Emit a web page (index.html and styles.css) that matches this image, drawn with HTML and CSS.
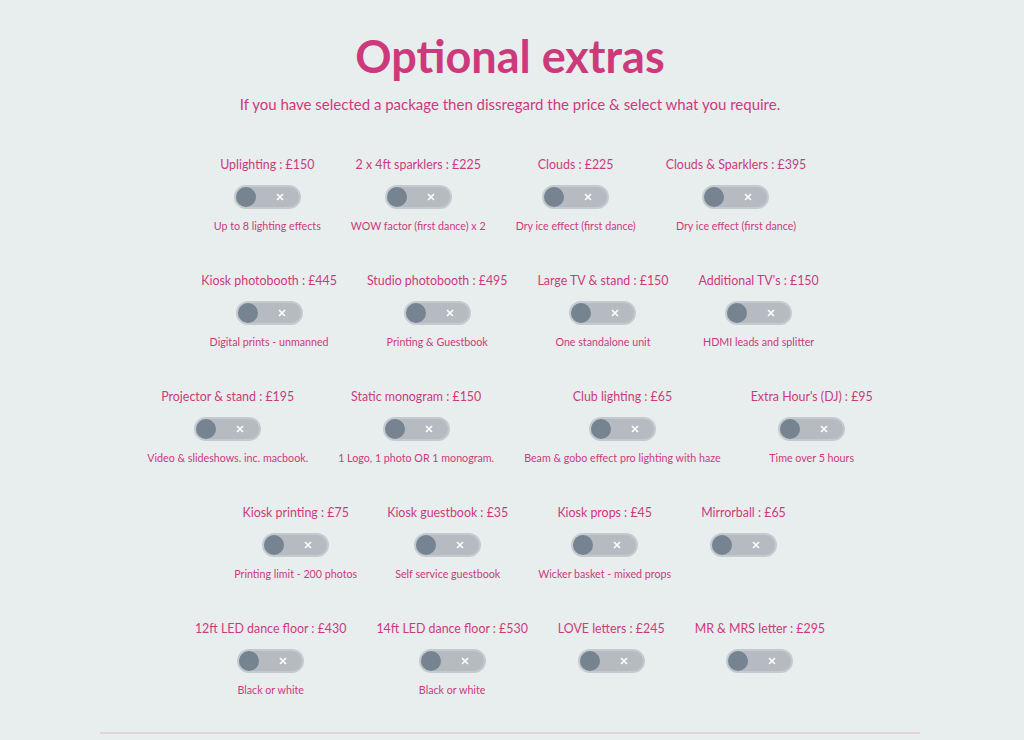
FILE: index.html
```html
<!DOCTYPE html>
<html lang="en">
  <head>
    <meta charset="UTF-8" />
    <meta name="viewport" content="width=device-width, initial-scale=1.0" />
    <title>Optional extras</title>
    <link rel="stylesheet" href="styles.css">
  </head>
  <body>
    <section id="extras">
      <h1 class="title">Optional extras</h1>
      <p class="intro">If you have selected a package then dissregard the price &amp; select what you require.</p>

      <div class="row">
        <div class="extra">
          <span class="name">Uplighting : £150</span>
          <label class="switch"><input type="checkbox" /><span class="track"><span class="knob"></span><svg class="cross" viewBox="0 0 8 8"><path d="M1 1L7 7M7 1L1 7" /></svg></span></label>
          <span class="note">Up to 8 lighting effects</span>
        </div>
        <div class="extra">
          <span class="name">2 x 4ft sparklers : £225</span>
          <label class="switch"><input type="checkbox" /><span class="track"><span class="knob"></span><svg class="cross" viewBox="0 0 8 8"><path d="M1 1L7 7M7 1L1 7" /></svg></span></label>
          <span class="note">WOW factor (first dance) x 2</span>
        </div>
        <div class="extra">
          <span class="name">Clouds : £225</span>
          <label class="switch"><input type="checkbox" /><span class="track"><span class="knob"></span><svg class="cross" viewBox="0 0 8 8"><path d="M1 1L7 7M7 1L1 7" /></svg></span></label>
          <span class="note">Dry ice effect (first dance)</span>
        </div>
        <div class="extra">
          <span class="name">Clouds &amp; Sparklers : £395</span>
          <label class="switch"><input type="checkbox" /><span class="track"><span class="knob"></span><svg class="cross" viewBox="0 0 8 8"><path d="M1 1L7 7M7 1L1 7" /></svg></span></label>
          <span class="note">Dry ice effect (first dance)</span>
        </div>
      </div>

      <div class="row">
        <div class="extra">
          <span class="name">Kiosk photobooth : £445</span>
          <label class="switch"><input type="checkbox" /><span class="track"><span class="knob"></span><svg class="cross" viewBox="0 0 8 8"><path d="M1 1L7 7M7 1L1 7" /></svg></span></label>
          <span class="note">Digital prints - unmanned</span>
        </div>
        <div class="extra">
          <span class="name">Studio photobooth : £495</span>
          <label class="switch"><input type="checkbox" /><span class="track"><span class="knob"></span><svg class="cross" viewBox="0 0 8 8"><path d="M1 1L7 7M7 1L1 7" /></svg></span></label>
          <span class="note">Printing &amp; Guestbook</span>
        </div>
        <div class="extra">
          <span class="name">Large TV &amp; stand : £150</span>
          <label class="switch"><input type="checkbox" /><span class="track"><span class="knob"></span><svg class="cross" viewBox="0 0 8 8"><path d="M1 1L7 7M7 1L1 7" /></svg></span></label>
          <span class="note">One standalone unit</span>
        </div>
        <div class="extra">
          <span class="name">Additional TV's : £150</span>
          <label class="switch"><input type="checkbox" /><span class="track"><span class="knob"></span><svg class="cross" viewBox="0 0 8 8"><path d="M1 1L7 7M7 1L1 7" /></svg></span></label>
          <span class="note">HDMI leads and splitter</span>
        </div>
      </div>

      <div class="row">
        <div class="extra">
          <span class="name">Projector &amp; stand : £195</span>
          <label class="switch"><input type="checkbox" /><span class="track"><span class="knob"></span><svg class="cross" viewBox="0 0 8 8"><path d="M1 1L7 7M7 1L1 7" /></svg></span></label>
          <span class="note">Video &amp; slideshows. inc. macbook.</span>
        </div>
        <div class="extra">
          <span class="name">Static monogram : £150</span>
          <label class="switch"><input type="checkbox" /><span class="track"><span class="knob"></span><svg class="cross" viewBox="0 0 8 8"><path d="M1 1L7 7M7 1L1 7" /></svg></span></label>
          <span class="note">1 Logo, 1 photo OR 1 monogram.</span>
        </div>
        <div class="extra">
          <span class="name">Club lighting : £65</span>
          <label class="switch"><input type="checkbox" /><span class="track"><span class="knob"></span><svg class="cross" viewBox="0 0 8 8"><path d="M1 1L7 7M7 1L1 7" /></svg></span></label>
          <span class="note">Beam &amp; gobo effect pro lighting with haze</span>
        </div>
        <div class="extra">
          <span class="name">Extra Hour's (DJ) : £95</span>
          <label class="switch"><input type="checkbox" /><span class="track"><span class="knob"></span><svg class="cross" viewBox="0 0 8 8"><path d="M1 1L7 7M7 1L1 7" /></svg></span></label>
          <span class="note">Time over 5 hours</span>
        </div>
      </div>

      <div class="row">
        <div class="extra">
          <span class="name">Kiosk printing : £75</span>
          <label class="switch"><input type="checkbox" /><span class="track"><span class="knob"></span><svg class="cross" viewBox="0 0 8 8"><path d="M1 1L7 7M7 1L1 7" /></svg></span></label>
          <span class="note">Printing limit - 200 photos</span>
        </div>
        <div class="extra">
          <span class="name">Kiosk guestbook : £35</span>
          <label class="switch"><input type="checkbox" /><span class="track"><span class="knob"></span><svg class="cross" viewBox="0 0 8 8"><path d="M1 1L7 7M7 1L1 7" /></svg></span></label>
          <span class="note">Self service guestbook</span>
        </div>
        <div class="extra">
          <span class="name">Kiosk props : £45</span>
          <label class="switch"><input type="checkbox" /><span class="track"><span class="knob"></span><svg class="cross" viewBox="0 0 8 8"><path d="M1 1L7 7M7 1L1 7" /></svg></span></label>
          <span class="note">Wicker basket - mixed props</span>
        </div>
        <div class="extra">
          <span class="name">Mirrorball : £65</span>
          <label class="switch"><input type="checkbox" /><span class="track"><span class="knob"></span><svg class="cross" viewBox="0 0 8 8"><path d="M1 1L7 7M7 1L1 7" /></svg></span></label>
          <span class="note"></span>
        </div>
      </div>

      <div class="row">
        <div class="extra">
          <span class="name">12ft LED dance floor : £430</span>
          <label class="switch"><input type="checkbox" /><span class="track"><span class="knob"></span><svg class="cross" viewBox="0 0 8 8"><path d="M1 1L7 7M7 1L1 7" /></svg></span></label>
          <span class="note">Black or white</span>
        </div>
        <div class="extra">
          <span class="name">14ft LED dance floor : £530</span>
          <label class="switch"><input type="checkbox" /><span class="track"><span class="knob"></span><svg class="cross" viewBox="0 0 8 8"><path d="M1 1L7 7M7 1L1 7" /></svg></span></label>
          <span class="note">Black or white</span>
        </div>
        <div class="extra">
          <span class="name">LOVE letters : £245</span>
          <label class="switch"><input type="checkbox" /><span class="track"><span class="knob"></span><svg class="cross" viewBox="0 0 8 8"><path d="M1 1L7 7M7 1L1 7" /></svg></span></label>
          <span class="note"></span>
        </div>
        <div class="extra">
          <span class="name">MR &amp; MRS letter : £295</span>
          <label class="switch"><input type="checkbox" /><span class="track"><span class="knob"></span><svg class="cross" viewBox="0 0 8 8"><path d="M1 1L7 7M7 1L1 7" /></svg></span></label>
          <span class="note"></span>
        </div>
      </div>

      <hr class="divider" />
    </section>
  </body>
</html>
```

FILE: styles.css
```css
body {
  margin: 0;
  padding: 0 4px 0 0;
  background-color: #e8eeee;
  font-family: Lato, "Noto Sans", sans-serif;
  color: #cc3a7c;
}

#extras {
  width: 820px;
  margin: 0 auto;
  padding-top: 26px;
  text-align: center;
}

.title {
  margin: 0;
  font-size: 45px;
  line-height: 60px;
  font-weight: 700;
}

.intro {
  margin: 8px 0 0;
  font-size: 15px;
  line-height: 20px;
}

.row {
  display: flex;
  justify-content: center;
  margin-top: 38px;
}

.intro + .row {
  margin-top: 42px;
}

.extra {
  display: flex;
  flex-direction: column;
  align-items: center;
  padding: 0 15px;
}

.name {
  font-size: 12.4px;
  line-height: 18px;
  white-space: nowrap;
}

.note {
  min-height: 16px;
  font-size: 10.7px;
  line-height: 16px;
  white-space: nowrap;
}

/* toggle switch */
.switch {
  display: block;
  margin: 11px 0 9px;
  cursor: pointer;
}

.switch input {
  display: none;
}

.track {
  position: relative;
  display: block;
  width: 63px;
  height: 20px;
  border: 2px solid #c4cacf;
  border-radius: 12px;
  background-color: #b5bbc1;
}

.knob {
  position: absolute;
  top: 0;
  left: 0;
  width: 20px;
  height: 20px;
  border-radius: 50%;
  background-color: #768390;
  transition: left 0.2s ease-in-out;
}

.cross {
  position: absolute;
  top: 6px;
  left: 40px;
  width: 8px;
  height: 8px;
}

.cross path {
  stroke: #ffffff;
  stroke-width: 1.6;
  fill: none;
}

.switch input:checked + .track {
  background-color: #cc3a7c;
}

.switch input:checked + .track .knob {
  left: 43px;
}

.divider {
  width: 820px;
  margin: 34px 0 0;
  border: 0;
  border-top: 2px solid #e3d3dc;
}
```
